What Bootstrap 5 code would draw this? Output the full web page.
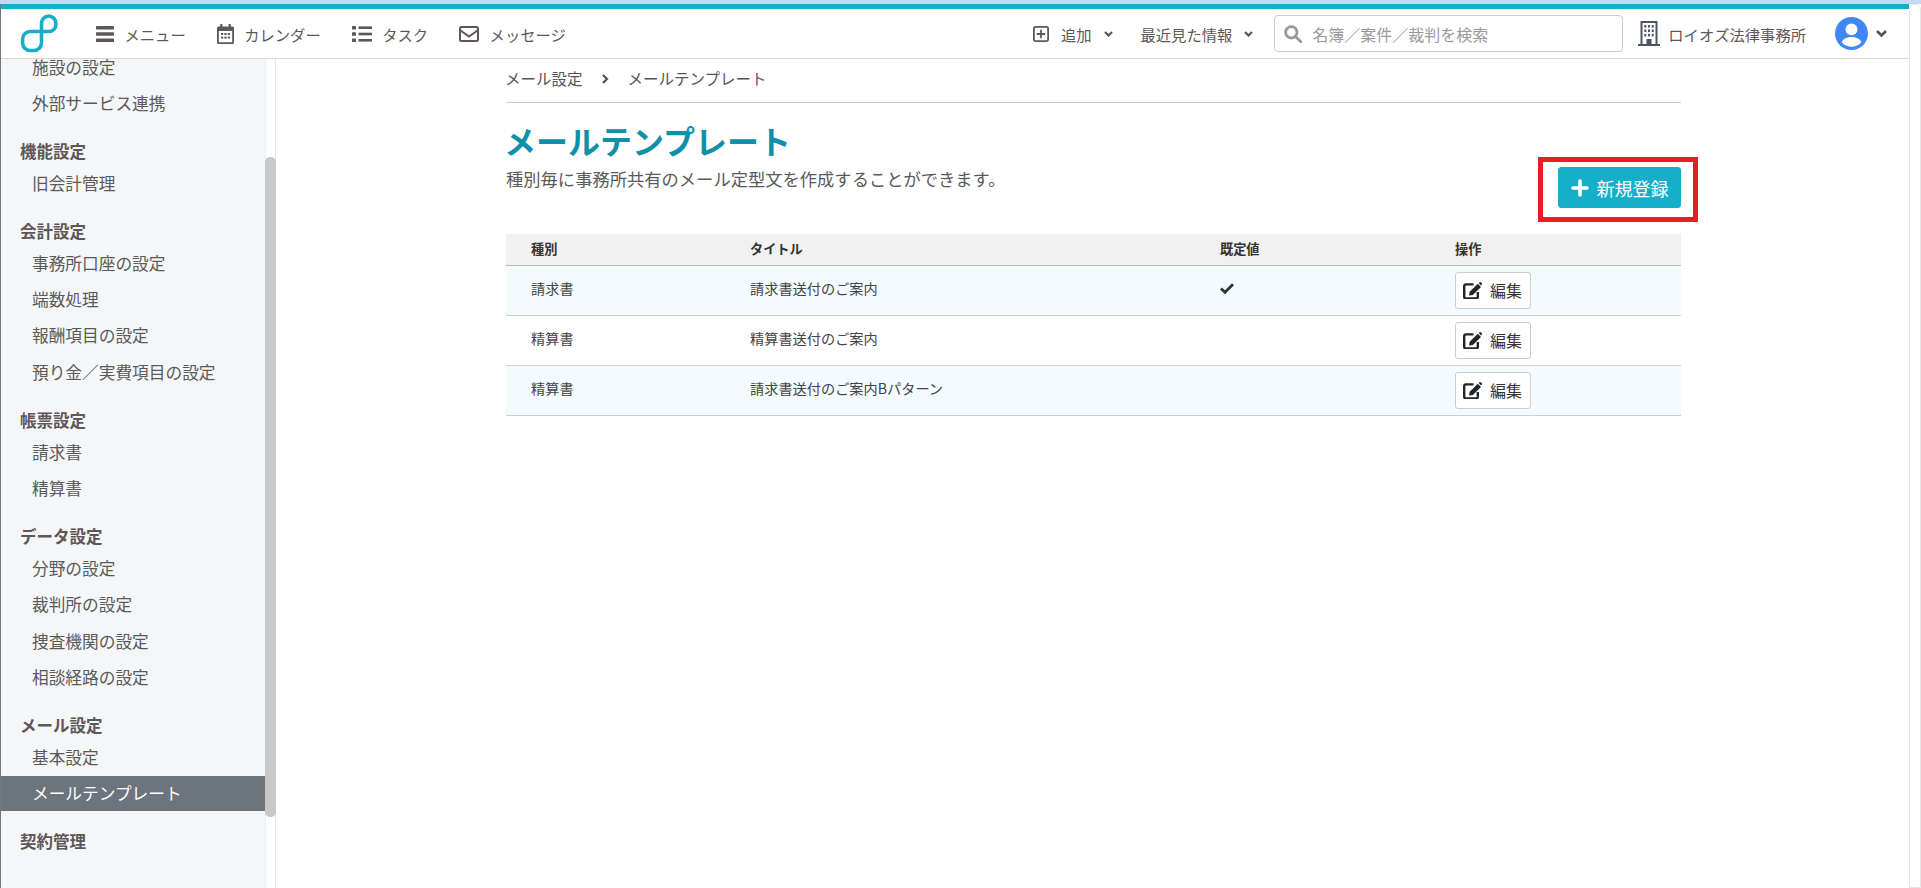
<!DOCTYPE html>
<html lang="ja">
<head>
    <meta charset="UTF-8">
    <title>メールテンプレート</title>
    <link href="https://cdn.jsdelivr.net/npm/bootstrap@5.3.0/dist/css/bootstrap.min.css" rel="stylesheet">
    <style>
        html, body { height: 100%; overflow: hidden; }
        body { font-family: "Noto Sans CJK JP", "Noto Sans", sans-serif; color: #555; background: #fff; }
        .top-strip { height: 4px; background: #c3d9f5; flex: none; }
        .app-inner { border-left: 1px solid #777; min-width: 0; }
        .page-scroll { width: 12px; flex: none; background: #fff; border: 1px solid #e6e6e6; border-radius: 5px 5px 0 0; }

        .app-nav { height: 55px; flex: none; padding: 0 22px 0 18px; background: #fff; border-top: 5px solid #17aec9; border-bottom: 1px solid #d9d9d9; flex-wrap: nowrap; justify-content: flex-start; }
        .app-nav svg { display: block; flex: none; }
        .nav-text { font-size: 15.3px; line-height: 22px; color: #5f5757; white-space: nowrap; }
        .nav-main { margin-left: 37px; gap: 31px; }
        .nav-main .icon-gap { gap: 10.5px; }
        .nav-side { margin-left: auto; }
        .chev { margin-left: 12px; }
        .recent { margin-left: 28px; }
        .search-box { margin-left: 21px; width: 349px; }
        .search-box svg { position: absolute; left: 10px; top: 10px; }
        .search-box .form-control { height: 37px; padding: 0 8px 0 37px; font-size: 16px; border-color: #ccc; border-radius: 4px; color: #555; }
        .search-box .form-control::placeholder { color: #999; opacity: 1; }
        .office { margin-left: 15px; gap: 8px; }
        .avatar { margin-left: 29px; }

        .side-menu { width: 264px; flex: none; background: #f5f6f8; overflow: hidden; }
        .side-menu .nav { margin-top: -10.5px; }
        .side-head { font-size: 16.5px; font-weight: 700; line-height: 28px; height: 28px; margin-top: 15.7px; padding-left: 19px; color: #5f5757; }
        .side-menu .nav-link { font-size: 16.7px; line-height: 36.3px; height: 36.3px; padding: 0 0 0 31px; color: #5a5a5a; }
        .side-menu .nav-link.active { background: #6c757d; color: #fff; height: 35px; line-height: 35px; margin: 1px 0 .3px; }
        .side-track { width: 11px; flex: none; background: #fff; border-left: 1px solid #eee; border-right: 1px solid #e6e6e6; }
        .side-thumb { width: 11px; margin: 98px 0 0 -1px; height: 660px; background: #c8c8c8; border-radius: 5px; }

        .content { width: 1175px; margin-left: 230px; flex: none; }
        .crumbs { height: 44px; border-bottom: 1px solid #ccc; font-size: 15.5px; color: #555; gap: 19px; padding-bottom: 4px; }
        .crumbs span:first-child { margin-left: -1px; }
        .page-head { height: 131px; }
        .page-head h1 { font-size: 32px; font-weight: 700; line-height: 40px; margin: 17px 0 0 -2px; color: #0e90a8; }
        .page-head p { font-size: 17.3px; line-height: 24px; margin: 7px 0 0; color: #5a5a5a; }
        .new-wrap { margin-top: 64px; height: 41px; }
        .btn-new { width: 123px; height: 41px; padding: 0; background: #17aec9; border-color: #17aec9; color: #fff; font-size: 18px; line-height: 24px; border-radius: 3px; gap: 8px; }
        .mark-box { position: absolute; left: -20px; right: -17px; top: -10px; bottom: -14px; border: 5px solid #ed1c24; pointer-events: none; }

        .mail-table { table-layout: fixed; margin: 0; color: #444; }
        .mail-table th { height: 31px; padding: 0 25px 1px; font-size: 13.2px; line-height: 28px; font-weight: 700; color: #333; background: #f1f1f1; border-bottom: 1px solid #bbb; vertical-align: middle; }
        .mail-table td { height: 50px; padding: 11px 25px 0; font-size: 14.2px; line-height: 22px; vertical-align: top; border-bottom: 1px solid #ccd0d4; }
        .mail-table tbody tr:nth-child(odd) td { background: #f3fbfe; }
        .mail-table td.op { padding-top: 6px; }
        .col-kind { width: 219px; }
        .col-title { width: 470px; }
        .col-def { width: 235px; }
        .btn-edit { width: 76px; height: 37px; padding: 0 0 0 7px; background: #fff; border: 1px solid #ccc; border-radius: 3px; color: #333; font-size: 16px; gap: 8px; }
        .check-mark { display: block; margin-top: 6px; }
    </style>
</head>
<body>
<svg width="0" height="0" class="d-block position-absolute">
    <symbol id="edit-icon" viewBox="0 0 19 17">
        <path d="M10.500 2.400H2.800a1.600 1.600 0 0 0-1.600 1.600v10.800a1.600 1.600 0 0 0 1.600 1.600h10.400a1.600 1.600 0 0 0 1.600-1.600V10" fill="none" stroke="#212529" stroke-width="2.400"/>
        <path d="M6 13.500l.7-3.700 8.100-8.100L18 4.900 9.900 13ZM15.700.9l.8-.6a1 1 0 0 1 1.300 0l1 1a1 1 0 0 1 0 1.300l-.8.800Z" fill="#212529"/>
    </symbol>
</svg>
<div class="d-flex flex-column vh-100">
    <div class="top-strip"></div>
    <div class="d-flex flex-grow-1 overflow-hidden">
        <div class="app-inner d-flex flex-column flex-grow-1">

            <nav class="navbar app-nav">
                <svg width="40" height="40" viewBox="0 0 40 40" fill="none" stroke="#17aec9" stroke-width="3.6">
                    <path d="M22.500 29V9.500a7.200 7.500 0 0 1 14.400 0v1a7 7 0 0 1-7 7H11a7.500 7.500 0 0 0-7.400 7.500v4a7.500 7.500 0 0 0 7.400 7.500h4a7.500 7.500 0 0 0 7.500-7.500Z"/>
                </svg>
                <div class="nav-main d-flex align-items-center">
                    <div class="icon-gap d-flex align-items-center">
                        <svg width="18" height="16" viewBox="0 0 18 16" fill="#5f5757"><rect width="18" height="3.4" rx=".6"/><rect y="6.3" width="18" height="3.4" rx=".6"/><rect y="12.6" width="18" height="3.4" rx=".6"/></svg>
                        <span class="nav-text">メニュー</span>
                    </div>
                    <div class="icon-gap d-flex align-items-center">
                        <svg width="17" height="20" viewBox="0 0 17 20" fill="#5f5757"><rect x="3.2" width="2.2" height="4" rx=".6"/><rect x="11.6" width="2.2" height="4" rx=".6"/><path fill-rule="evenodd" d="M1.500 2.400h14A1.500 1.500 0 0 1 17 3.900v14.600a1.500 1.500 0 0 1-1.500 1.500h-14A1.500 1.500 0 0 1 0 18.500V3.900A1.500 1.500 0 0 1 1.500 2.400ZM1.800 7v11.200h13.400V7Z"/><rect x="4" y="9" width="2.2" height="2"/><rect x="7.4" y="9" width="2.2" height="2"/><rect x="10.8" y="9" width="2.2" height="2"/><rect x="4" y="12.6" width="2.2" height="2"/><rect x="7.4" y="12.6" width="2.2" height="2"/><rect x="10.8" y="12.6" width="2.2" height="2"/></svg>
                        <span class="nav-text">カレンダー</span>
                    </div>
                    <div class="icon-gap d-flex align-items-center">
                        <svg width="20" height="16" viewBox="0 0 20 16" fill="#5f5757"><rect width="4" height="3.4" rx=".5"/><rect x="6.5" y=".4" width="13.5" height="2.6"/><rect y="6.3" width="4" height="3.4" rx=".5"/><rect x="6.5" y="6.7" width="13.5" height="2.6"/><rect y="12.6" width="4" height="3.4" rx=".5"/><rect x="6.5" y="13" width="13.5" height="2.6"/></svg>
                        <span class="nav-text">タスク</span>
                    </div>
                    <div class="icon-gap d-flex align-items-center">
                        <svg width="20" height="16" viewBox="0 0 20 16" fill="none" stroke="#5f5757" stroke-width="2"><rect x="1" y="1" width="18" height="14" rx="1.5"/><path d="M1.500 4.500 10 10.500l8.500-6"/></svg>
                        <span class="nav-text">メッセージ</span>
                    </div>
                </div>

                <div class="nav-side d-flex align-items-center">
                    <svg width="16" height="16" viewBox="0 0 16 16" fill="none" stroke="#5f5757" stroke-width="1.8"><rect x=".9" y=".9" width="14.2" height="14.2" rx="1.5"/><path d="M8 3.800v8.400M3.800 8h8.400"/></svg>
                    <span class="nav-text ms-2 ps-1">追加</span>
                    <svg class="chev" width="9" height="6" viewBox="0 0 9 6" fill="none" stroke="#5f5757" stroke-width="2.2"><path d="m1 1 3.500 3.500L8 1"/></svg>
                    <span class="nav-text recent">最近見た情報</span>
                    <svg class="chev" width="9" height="6" viewBox="0 0 9 6" fill="none" stroke="#5f5757" stroke-width="2.2"><path d="m1 1 3.500 3.500L8 1"/></svg>
                    <div class="search-box position-relative">
                        <svg width="18" height="18" viewBox="0 0 18 18" fill="none" stroke="#999" stroke-width="2.8"><circle cx="7.3" cy="7.3" r="5.7"/><path d="m11.500 11.500 5.300 5.300" stroke-linecap="round"/></svg>
                        <input class="form-control" type="text" placeholder="名簿／案件／裁判を検索">
                    </div>
                    <div class="office d-flex align-items-center">
                        <svg width="22" height="25" viewBox="0 0 22 25" fill="#4c5560"><path fill-rule="evenodd" d="M2.500 0h17v23H22v2H0v-2h2.500ZM4.500 2v21h13V2Z"/><g><rect x="6.3" y="4" width="2" height="2.6"/><rect x="10" y="4" width="2" height="2.6"/><rect x="13.7" y="4" width="2" height="2.6"/><rect x="6.3" y="8.4" width="2" height="2.6"/><rect x="10" y="8.4" width="2" height="2.6"/><rect x="13.7" y="8.4" width="2" height="2.6"/><rect x="6.3" y="12.8" width="2" height="2.6"/><rect x="10" y="12.8" width="2" height="2.6"/><rect x="13.7" y="12.8" width="2" height="2.6"/><rect x="8.5" y="18" width="5" height="5"/></g></svg>
                        <span class="nav-text">ロイオズ法律事務所</span>
                    </div>
                    <svg class="avatar" width="33" height="33" viewBox="0 0 32 32"><circle cx="16" cy="16" r="16" fill="#4086f4"/><circle cx="16" cy="12" r="5.8" fill="#fff"/><path d="M6.500 24.500C8 20.800 12 19.500 16 19.500s8 1.300 9.500 5a12.500 12.500 0 0 1-19 0Z" fill="#fff"/></svg>
                    <svg class="ms-2" width="11" height="7" viewBox="0 0 11 7" fill="none" stroke="#4f5560" stroke-width="2.6"><path d="m1 1 4.500 4.500L10 1"/></svg>
                </div>
            </nav>

            <div class="d-flex flex-grow-1 overflow-hidden">
                <aside class="side-menu">
                    <div class="nav flex-column flex-nowrap">
                        <a class="nav-link" href="#">施設の設定</a>
                        <a class="nav-link" href="#">外部サービス連携</a>
                        <div class="side-head">機能設定</div>
                        <a class="nav-link" href="#">旧会計管理</a>
                        <div class="side-head">会計設定</div>
                        <a class="nav-link" href="#">事務所口座の設定</a>
                        <a class="nav-link" href="#">端数処理</a>
                        <a class="nav-link" href="#">報酬項目の設定</a>
                        <a class="nav-link" href="#">預り金／実費項目の設定</a>
                        <div class="side-head">帳票設定</div>
                        <a class="nav-link" href="#">請求書</a>
                        <a class="nav-link" href="#">精算書</a>
                        <div class="side-head">データ設定</div>
                        <a class="nav-link" href="#">分野の設定</a>
                        <a class="nav-link" href="#">裁判所の設定</a>
                        <a class="nav-link" href="#">捜査機関の設定</a>
                        <a class="nav-link" href="#">相談経路の設定</a>
                        <div class="side-head">メール設定</div>
                        <a class="nav-link" href="#">基本設定</a>
                        <a class="nav-link active" href="#">メールテンプレート</a>
                        <div class="side-head">契約管理</div>
                    </div>
                </aside>
                <div class="side-track"><div class="side-thumb"></div></div>

                <main class="content">
                    <div class="crumbs d-flex align-items-center">
                        <span>メール設定</span>
                        <svg width="7" height="10" viewBox="0 0 7 10" fill="none" stroke="#4f5560" stroke-width="2.2"><path d="m1 1 4 4-4 4"/></svg>
                        <span>メールテンプレート</span>
                    </div>
                    <div class="page-head d-flex justify-content-between">
                        <div>
                            <h1>メールテンプレート</h1>
                            <p>種別毎に事務所共有のメール定型文を作成することができます。</p>
                        </div>
                        <div class="new-wrap position-relative">
                            <button class="btn btn-new d-flex align-items-center justify-content-center" type="button">
                                <svg width="18" height="18" viewBox="0 0 18 18" stroke="#fff" stroke-width="3.6" stroke-linecap="round"><path d="M9 2v14M2 9h14"/></svg>
                                <span>新規登録</span>
                            </button>
                            <div class="mark-box"></div>
                        </div>
                    </div>
                    <table class="table mail-table">
                        <colgroup><col class="col-kind"><col class="col-title"><col class="col-def"><col></colgroup>
                        <thead>
                            <tr><th>種別</th><th>タイトル</th><th>既定値</th><th>操作</th></tr>
                        </thead>
                        <tbody>
                            <tr>
                                <td>請求書</td>
                                <td>請求書送付のご案内</td>
                                <td><svg class="check-mark" width="14" height="11" viewBox="0 0 14 11" fill="none" stroke="#333" stroke-width="2.8"><path d="m1 5.500 4 3.800L13 1.200"/></svg></td>
                                <td class="op"><button class="btn btn-edit d-flex align-items-center" type="button"><svg width="19" height="17"><use href="#edit-icon"/></svg><span>編集</span></button></td>
                            </tr>
                            <tr>
                                <td>精算書</td>
                                <td>精算書送付のご案内</td>
                                <td></td>
                                <td class="op"><button class="btn btn-edit d-flex align-items-center" type="button"><svg width="19" height="17"><use href="#edit-icon"/></svg><span>編集</span></button></td>
                            </tr>
                            <tr>
                                <td>精算書</td>
                                <td>請求書送付のご案内Bパターン</td>
                                <td></td>
                                <td class="op"><button class="btn btn-edit d-flex align-items-center" type="button"><svg width="19" height="17"><use href="#edit-icon"/></svg><span>編集</span></button></td>
                            </tr>
                        </tbody>
                    </table>
                </main>
            </div>
        </div>
        <div class="page-scroll"></div>
    </div>
</div>
<script src="https://cdn.jsdelivr.net/npm/bootstrap@5.3.0/dist/js/bootstrap.bundle.min.js"></script>
</body>
</html>
